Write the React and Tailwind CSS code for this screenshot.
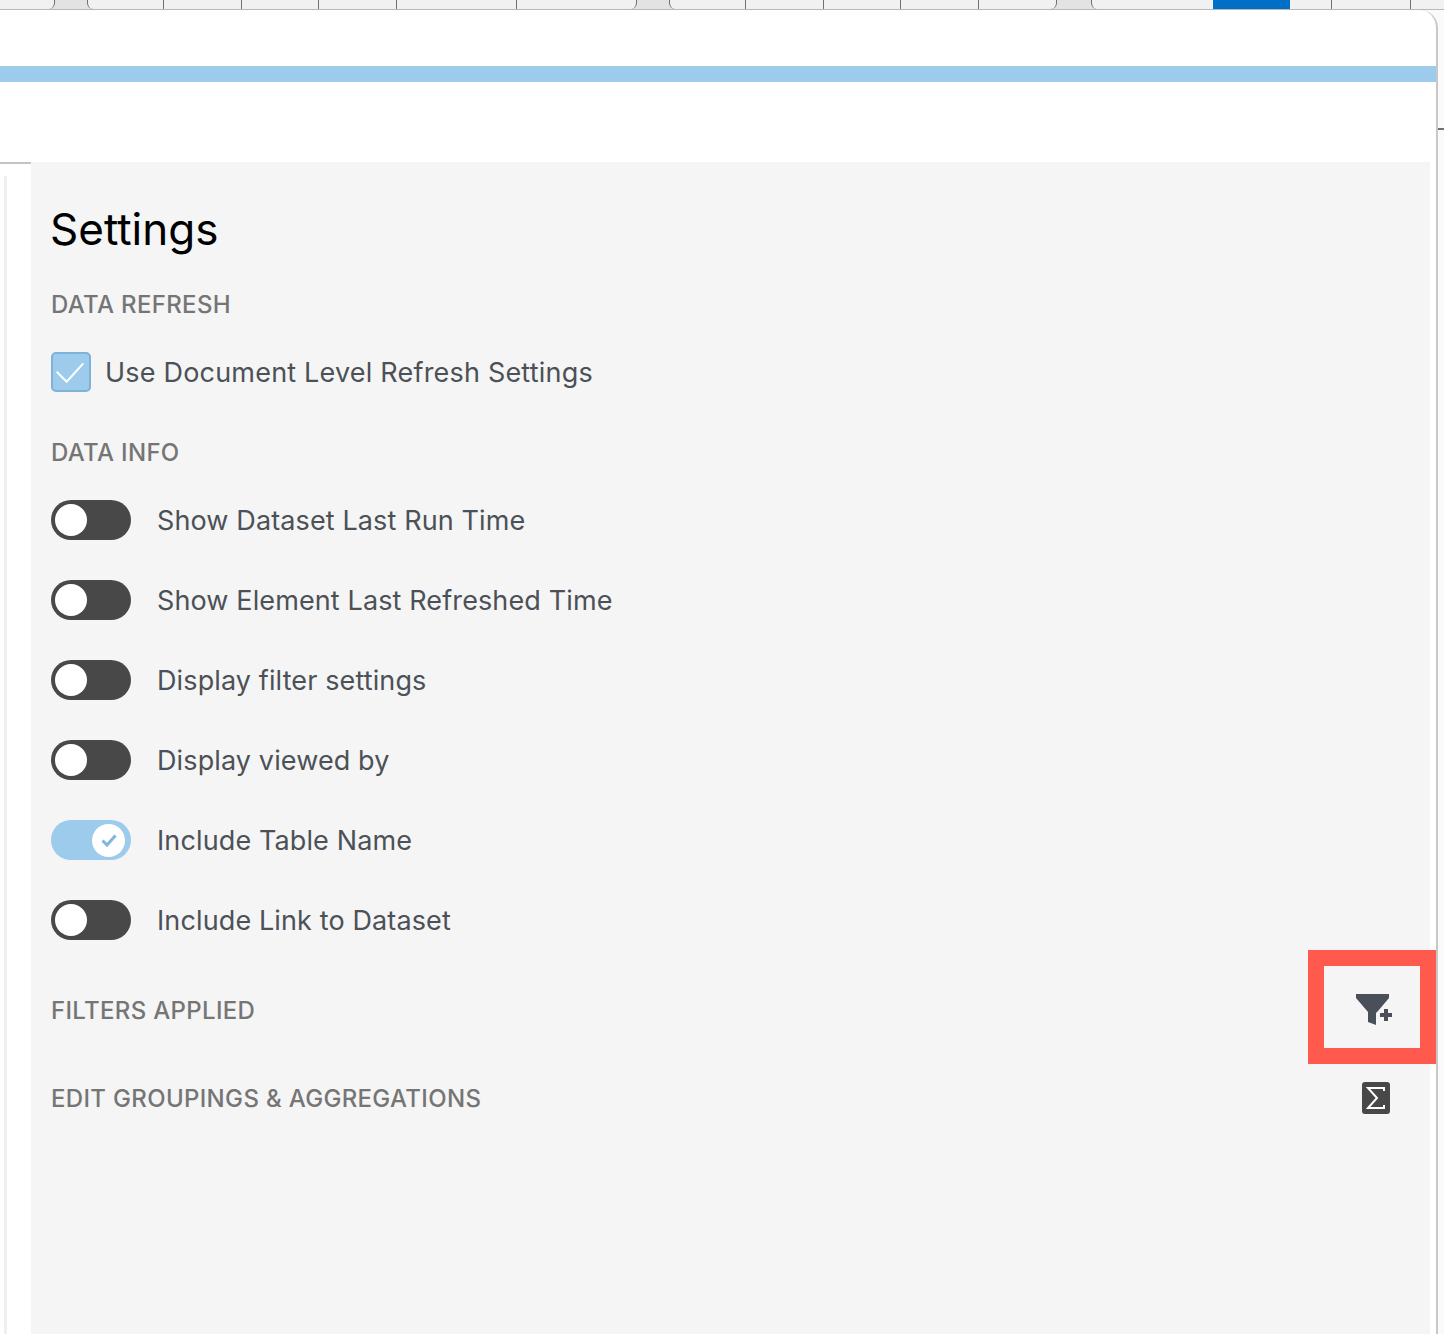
import React from 'react';

const tabs = [
  { w: 'w-[55px]', cls: 'rounded-br-[6px] border-r' },
  { w: 'w-[32px]', gap: true },
  { w: 'w-[77px]', cls: 'rounded-bl-[6px] border-l border-r' },
  { w: 'w-[78px]', cls: 'border-r' },
  { w: 'w-[77px]', cls: 'border-r' },
  { w: 'w-[78px]', cls: 'border-r' },
  { w: 'w-[120px]', cls: 'border-r' },
  { w: 'w-[120px]', cls: 'rounded-br-[6px] border-r' },
  { w: 'w-[32px]', gap: true },
  { w: 'w-[77px]', cls: 'rounded-bl-[6px] border-l border-r' },
  { w: 'w-[78px]', cls: 'border-r' },
  { w: 'w-[77px]', cls: 'border-r' },
  { w: 'w-[78px]', cls: 'border-r' },
  { w: 'w-[78px]', cls: 'rounded-br-[6px] border-r' },
  { w: 'w-[34px]', gap: true },
  { w: 'w-[122px]', cls: 'rounded-bl-[6px] border-l' },
  { w: 'w-[77px]', blue: true },
  { w: 'w-[42px]', cls: 'border-r' },
  { w: 'w-[79px]', cls: 'border-r' },
  { w: 'flex-1', cls: '' },
];

const SectionLabel = ({ children }) => (
  <div className="pt-[2px] text-[24px] leading-[26px] font-medium tracking-[0.33px] text-[#757575]">{children}</div>
);

const Toggle = ({ on }) =>
  on ? (
    <div className="flex h-10 w-20 items-center justify-end rounded-full bg-[#9ccbec] pr-[6px]">
      <div className="flex h-[33px] w-[33px] items-center justify-center rounded-full bg-white">
        <svg width="20" height="20" viewBox="0 0 20 20" fill="none">
          <path d="M3.5 10.5 L8 15 L16.5 5.5" stroke="#7fb6de" strokeWidth="3" />
        </svg>
      </div>
    </div>
  ) : (
    <div className="flex h-10 w-20 items-center rounded-full bg-[#484848] pl-[4px]">
      <div className="h-8 w-8 rounded-full bg-white" />
    </div>
  );

const ToggleRow = ({ on, label }) => (
  <div className="flex h-20 items-center gap-[26px]">
    <Toggle on={on} />
    <span className="text-[27px] leading-none tracking-[0.12px] text-[#4c5157]">{label}</span>
  </div>
);

const App = () => {
  return (
    <div className="flex h-[1334px] w-[1444px] flex-col overflow-hidden bg-[#fafafa] font-['Inter',sans-serif]">
      {/* Sheet behind the modal */}
      <div className="flex h-[10px] shrink-0 border-b border-[#b8b8b8] bg-[#e3e3e3]">
        {tabs.map((t, i) =>
          t.gap ? (
            <div key={i} className={t.w} />
          ) : t.blue ? (
            <div key={i} className={`${t.w} bg-[#006fc8]`} />
          ) : (
            <div key={i} className={`${t.w} ${t.cls} border-[#707070] bg-[#f1f1f1]`} />
          )
        )}
      </div>

      <div className="flex flex-1">
        <div className="flex w-[1438px] flex-col overflow-hidden rounded-tr-[18px] border-r-2 border-[#c8c8c8] bg-white">
          <div className="mt-[56px] h-4 shrink-0 bg-[#9ccbec]" />
          <div className="h-20 shrink-0" />

          <div className="flex flex-1">
            <div className="w-[31px] shrink-0">
              <div className="h-[2px] bg-[#c4c4c4]" />
              <div className="ml-[4px] mt-3 h-full w-[3px] bg-[#efefef]" />
            </div>

            <div className="mr-[6px] flex flex-1 flex-col bg-[#f5f5f5] pl-5">
              <h1 className="-ml-px mt-[39px] text-[44px] leading-[56px] font-normal text-black">Settings</h1>
              <div className="mt-[33px]">
                <SectionLabel>DATA REFRESH</SectionLabel>
              </div>

              <div className="mt-[34px] flex items-center gap-[14px]">
                <div className="flex h-10 w-10 items-center justify-center rounded-[5px] border-2 border-[#7fb2d6] bg-[#9ccbec]">
                  <svg width="32" height="24" viewBox="0 0 32 24" fill="none">
                    <path d="M1.7 11.7 L11.7 21.7 L28.3 3.3" stroke="white" strokeWidth="2" />
                  </svg>
                </div>
                <span className="text-[27px] leading-none tracking-[0.2px] text-[#4c5157]">
                  Use Document Level Refresh Settings
                </span>
              </div>

              <div className="mt-[46px]">
                <SectionLabel>DATA INFO</SectionLabel>
              </div>

              <div className="mt-[14px] flex flex-col">
                <ToggleRow label="Show Dataset Last Run Time" />
                <ToggleRow label="Show Element Last Refreshed Time" />
                <ToggleRow label="Display filter settings" />
                <ToggleRow label="Display viewed by" />
                <ToggleRow on label="Include Table Name" />
                <ToggleRow label="Include Link to Dataset" />
              </div>

              <div className="relative mt-[30px] flex h-[40px] items-center justify-between">
                <SectionLabel>FILTERS APPLIED</SectionLabel>
                <svg className="mr-[38px]" width="36" height="32" viewBox="0 0 36 32" fill="#4a5059">
                  <path d="M0 0 H33 V4 L22 17 L20 19 V31 L12 28 V18 L0 4 Z" />
                  <path d="M28 15 H32 V19 H36 V23 H32 V27 H28 V23 H24 V19 H28 Z" />
                </svg>
                {/* highlight box over the filter button */}
                <div className="absolute right-[-6px] top-[-40px] h-[114px] w-[128px] border-[16px] border-[#ff5a4d]" />
              </div>

              <div className="mt-[48px] flex h-[40px] items-center justify-between">
                <SectionLabel>EDIT GROUPINGS &amp; AGGREGATIONS</SectionLabel>
                <svg className="mr-[40px]" width="28" height="32" viewBox="0 0 28 32">
                  <rect width="28" height="32" rx="3" fill="#484848" />
                  <path d="M22 9 V6 H6 L15 16 L6 26 H22 V23" fill="none" stroke="white" strokeWidth="2" />
                </svg>
              </div>
            </div>
          </div>
        </div>

        {/* Sheet edge to the right of the modal */}
        <div className="flex flex-1 flex-col">
          <div className="mt-[118px] h-[2px] bg-[#707070]" />
        </div>
      </div>
    </div>
  );
};

export default App;
